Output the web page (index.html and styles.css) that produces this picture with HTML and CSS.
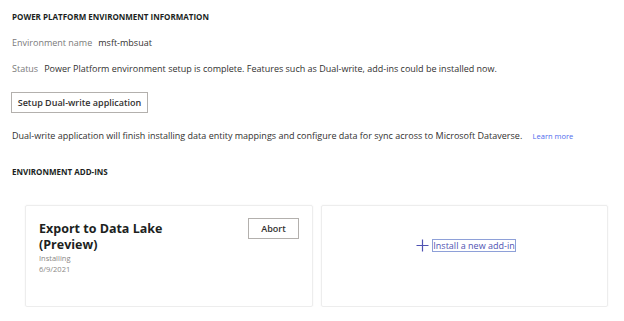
FILE: index.html
```html
<!DOCTYPE html>
<html lang="en">
<head>
  <meta charset="UTF-8" />
  <title>Environment information</title>
  <link rel="stylesheet" href="styles.css">
</head>
<body>
  <!-- 環境資訊 -->
  <h2 class="section-title first">Power Platform environment information</h2>
  <div class="field"><span class="label">Environment name</span><span class="value">msft-mbsuat</span></div>
  <div class="field"><span class="label">Status</span><span class="value">Power Platform environment setup is complete. Features such as Dual-write, add-ins could be installed now.</span></div>
  <button class="btn btn-setup">Setup Dual-write application</button>
  <p class="note">Dual-write application will finish installing data entity mappings and configure data for sync across to Microsoft Dataverse. <a href="#" class="learn">Learn more</a></p>

  <!-- 增益集 -->
  <h2 class="section-title">Environment add-ins</h2>
  <div class="cards">
    <div class="card">
      <div class="card-head">
        <div class="card-title">Export to Data Lake (Preview)</div>
        <button class="btn btn-abort">Abort</button>
      </div>
      <div class="card-meta">Installing</div>
      <div class="card-meta">6/9/2021</div>
    </div>
    <div class="card card-add">
      <span class="plus">
        <svg width="13" height="13" viewBox="0 0 13 13"><path d="M6.5 0.5v12M0.5 6.5h12" stroke="#4f52b2" stroke-width="1.2" fill="none"/></svg>
      </span>
      <a href="#" class="add-link">Install a new add-in</a>
    </div>
  </div>
</body>
</html>
```
FILE: styles.css
```css
  body {
    font-family: 'Open Sans', 'Noto Sans', sans-serif;
    margin: 0;
    padding: 0 12px;
    color: #323130;
    background: #fff;
  }

  .section-title {
    font-size: 8px;
    font-weight: 700;
    text-transform: uppercase;
    color: #201f1e;
    margin: 0;
    padding-top: 24px;
    line-height: 12px;
  }

  .section-title.first {
    padding-top: 11px;
  }

  .field {
    font-size: 9px;
    line-height: 12px;
    margin-top: 14px;
  }

  .field .label {
    color: #7a7a7a;
    margin-right: 6px;
  }

  .field .value {
    color: #323130;
  }

  .btn {
    font-family: inherit;
    background: #fff;
    border: 1px solid #b3b0ad;
    color: #323130;
    font-weight: 600;
    cursor: pointer;
  }

  .btn-setup {
    display: block;
    margin: 17px 0 0 -1px;
    height: 21px;
    width: 137px;
    font-size: 9px;
    padding: 0;
  }

  .note {
    font-size: 9px;
    line-height: 12px;
    margin: 17px 0 0;
  }

  .learn {
    color: #4f6bed;
    text-decoration: none;
    font-size: 7.5px;
    margin-left: 8px;
  }

  /* 卡片 */
  .cards {
    display: flex;
    gap: 8px;
    margin: 27px 0 0 13px;
  }

  .card {
    width: 288px;
    height: 102px;
    box-sizing: border-box;
    border: 1px solid #ededed;
    border-radius: 2px;
    box-shadow: 0 0 2px rgba(0,0,0,0.06);
    padding: 12px 13px;
  }

  .card-head {
    display: flex;
    justify-content: space-between;
    align-items: flex-start;
  }

  .card-title {
    font-size: 12.5px;
    font-weight: 700;
    line-height: 16px;
    width: 130px;
    margin-top: 3px;
    color: #201f1e;
  }

  .btn-abort {
    width: 51px;
    height: 21px;
    font-size: 9px;
    padding: 0;
  }

  .card-meta {
    font-size: 7.5px;
    line-height: 11px;
    color: #8a8886;
  }

  .card-add {
    width: 287px;
    display: flex;
    align-items: center;
    justify-content: center;
    gap: 4px;
    padding: 0 0 22px 2px;
  }

  .plus {
    display: flex;
  }

  .add-link {
    font-size: 9px;
    color: #4f52b2;
    text-decoration: none;
    outline: 1px solid #8ea0d8;
    line-height: 11px;
  }
```
